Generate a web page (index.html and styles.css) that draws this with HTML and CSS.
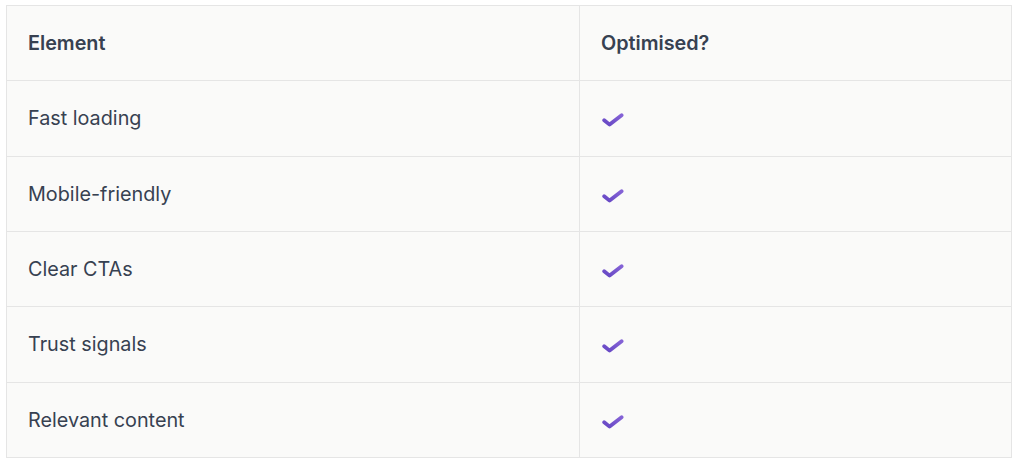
FILE: index.html
```html
<!DOCTYPE html>
<html>
<head>
<meta charset="utf-8">
<link rel="stylesheet" href="styles.css">
</head>
<body>
<div class="wrap">
<table class="tbl">
  <thead>
    <tr><th class="c1">Element</th><th>Optimised?</th></tr>
  </thead>
  <tbody>
    <tr><td class="c1">Fast loading</td><td><svg class="chk" viewBox="0 0 22 14" width="22" height="14"><defs><linearGradient id="g" x1="0" y1="1" x2="1" y2="0"><stop offset="0" stop-color="#6647c4"/><stop offset="1" stop-color="#8462d6"/></linearGradient></defs><path d="M2.2 7.2 L7.6 11.6 L19.6 2.2" fill="none" stroke="url(#g)" stroke-width="3.8" stroke-linecap="round" stroke-linejoin="round"/></svg></td></tr>
    <tr><td class="c1">Mobile-friendly</td><td><svg class="chk" viewBox="0 0 22 14" width="22" height="14"><path d="M2.2 7.2 L7.6 11.6 L19.6 2.2" fill="none" stroke="url(#g)" stroke-width="3.8" stroke-linecap="round" stroke-linejoin="round"/></svg></td></tr>
    <tr><td class="c1">Clear CTAs</td><td><svg class="chk" viewBox="0 0 22 14" width="22" height="14"><path d="M2.2 7.2 L7.6 11.6 L19.6 2.2" fill="none" stroke="url(#g)" stroke-width="3.8" stroke-linecap="round" stroke-linejoin="round"/></svg></td></tr>
    <tr><td class="c1">Trust signals</td><td><svg class="chk" viewBox="0 0 22 14" width="22" height="14"><path d="M2.2 7.2 L7.6 11.6 L19.6 2.2" fill="none" stroke="url(#g)" stroke-width="3.8" stroke-linecap="round" stroke-linejoin="round"/></svg></td></tr>
    <tr><td class="c1">Relevant content</td><td><svg class="chk" viewBox="0 0 22 14" width="22" height="14"><path d="M2.2 7.2 L7.6 11.6 L19.6 2.2" fill="none" stroke="url(#g)" stroke-width="3.8" stroke-linecap="round" stroke-linejoin="round"/></svg></td></tr>
  </tbody>
</table>
</div>
</body>
</html>
```
FILE: styles.css
```css
html, body {
  margin: 0;
  padding: 0;
  background: #ffffff;
}
.wrap {
  padding: 5px 0 0 6px;
}
.tbl {
  width: 1006px;
  border-collapse: collapse;
  font-family: Inter, "Liberation Sans", sans-serif;
  font-size: 19.8px;
  color: #374151;
  background: #fafaf9;
  table-layout: fixed;
}
.tbl th, .tbl td {
  border: 1px solid #e5e5e5;
  height: 75.33px;
  padding: 0 21px;
  text-align: left;
  vertical-align: middle;
  line-height: 24px;
  box-sizing: border-box;
}
.tbl th {
  font-weight: 600;
}
.tbl td {
  font-weight: 400;
}
.tbl .c1 {
  width: 573px;
}
.chk {
  display: block;
  margin: 4px 0 0 1px;
}
```
